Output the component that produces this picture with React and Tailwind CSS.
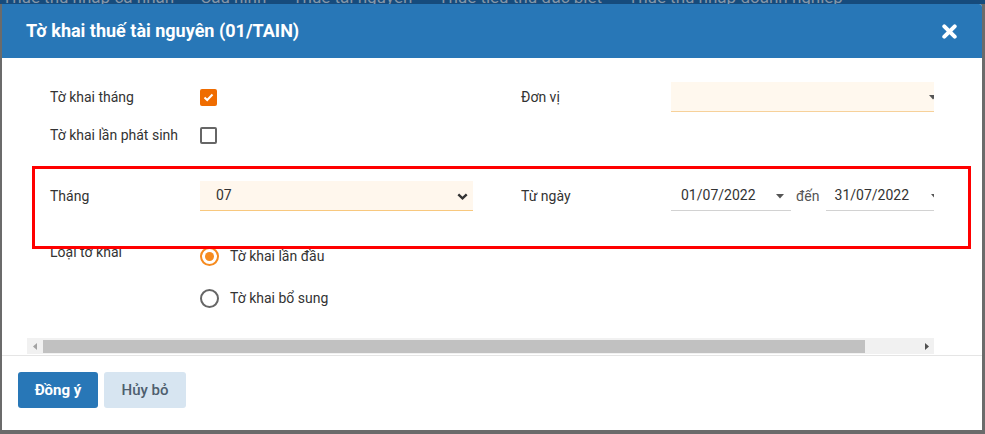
import React from "react";

function Caret({ className = "" }) {
  return (
    <svg width="8" height="5" viewBox="0 0 8 5" className={className}>
      <polygon points="0,0 8,0 4,4.5" fill="#555" />
    </svg>
  );
}

export default function App() {
  return (
    <div className="w-[985px] h-[434px] bg-[#6b6b6b] overflow-hidden font-['Roboto',sans-serif] text-[#333]">
      <div className="h-[4px] bg-[#164b7c] overflow-hidden">
        <div className="flex gap-[26px] pl-[2px] text-[17px] leading-[17px] -mt-[11px] text-[#8596a8] whitespace-nowrap">
          <span>Thuế thu nhập cá nhân</span>
          <span>Cấu hình</span>
          <span>Thuế tài nguyên</span>
          <span>Thuế tiêu thụ đặc biệt</span>
          <span>Thuế thu nhập doanh nghiệp</span>
        </div>
      </div>
      <div className="relative ml-[2px] w-[980px] h-[426px] bg-white flex flex-col rounded-tr-[3px]">
        {/* Header */}
        <div className="h-[54px] bg-[#2877b7] rounded-tr-[3px] flex items-center justify-between pl-[24px] pr-[25px]">
          <div className="text-white text-[18px] font-bold leading-none">Tờ khai thuế tài nguyên (01/TAIN)</div>
          <svg width="15" height="15" viewBox="0 0 15 15">
            <line x1="2.3" y1="2.3" x2="12.7" y2="12.7" stroke="#fff" strokeWidth="4" strokeLinecap="round" />
            <line x1="12.7" y1="2.3" x2="2.3" y2="12.7" stroke="#fff" strokeWidth="4" strokeLinecap="round" />
          </svg>
        </div>

        {/* Body */}
        <div className="h-[297px] pl-[25px] border-b border-[#e5e5e5] box-content">
          <div className="w-[907px] h-[280px] overflow-hidden">
            <div className="w-[960px] pl-[23px] pt-[24px] text-[14px]">
              {/* Row 1 */}
              <div className="flex items-center h-[30px]">
                <div className="w-[150px]">Tờ khai tháng</div>
                <div className="w-[321px] flex items-center">
                  <div className="w-[17px] h-[17px] rounded-[2px] bg-[#ef6c00] flex items-center justify-center">
                    <svg width="11" height="9" viewBox="0 0 11 9">
                      <polyline points="1.5,4.5 4.2,7 9.5,1.5" fill="none" stroke="#fff" strokeWidth="2" />
                    </svg>
                  </div>
                </div>
                <div className="w-[150px]">Đơn vị</div>
                <div className="relative w-[273px] h-[30px] bg-[#fff8ee] border-b border-[#f7d19a]">
                  <Caret className="absolute right-[7px] top-[13px]" />
                </div>
              </div>

              {/* Row 2 */}
              <div className="flex items-center h-[31px] mt-[8px]">
                <div className="w-[150px]">Tờ khai lần phát sinh</div>
                <div className="w-[17px] h-[17px] rounded-[2px] border-2 border-[#666]"></div>
              </div>

              {/* Row 3 */}
              <div className="flex items-center h-[30px] mt-[30px]">
                <div className="w-[150px]">Tháng</div>
                <div className="w-[321px]">
                  <div className="relative w-[273px] h-[30px] bg-[#fff7ed] border-b border-[#f8c87e] flex items-center pl-[16px]">
                    07
                    <svg width="11" height="7" viewBox="0 0 11 7" className="absolute right-[5px] top-[12px]">
                      <polyline points="1.3,1.3 5.5,5.3 9.7,1.3" fill="none" stroke="#333" strokeWidth="2.4" />
                    </svg>
                  </div>
                </div>
                <div className="w-[150px]">Từ ngày</div>
                <div className="flex items-center">
                  <div className="relative w-[120px] h-[30px] border-b border-[#d2d2d2] flex items-center pl-[10px]">
                    01/07/2022
                    <Caret className="absolute right-[7px] top-[13px]" />
                  </div>
                  <span className="ml-[5px] text-[#555]">đến</span>
                  <div className="relative ml-[6px] w-[120px] h-[30px] border-b border-[#d2d2d2] flex items-center pl-[9px]">
                    31/07/2022
                    <Caret className="absolute right-[7px] top-[13px]" />
                  </div>
                </div>
              </div>

              {/* Row 4 */}
              <div className="flex items-start h-[20px] mt-[35px]">
                <div className="w-[150px] leading-[20px] -mt-[4px]">Loại tờ khai</div>
                <div className="flex items-center h-[20px]">
                  <div className="w-[19px] h-[19px] rounded-full border-2 border-[#f68b1f] flex items-center justify-center">
                    <div className="w-[9px] h-[9px] rounded-full bg-[#f68b1f]"></div>
                  </div>
                  <span className="ml-[11px]">Tờ khai lần đầu</span>
                </div>
              </div>

              {/* Row 5 */}
              <div className="flex items-center h-[20px] mt-[22px]">
                <div className="w-[150px]"></div>
                <div className="w-[19px] h-[19px] rounded-full border-2 border-[#666]"></div>
                <span className="ml-[11px]">Tờ khai bổ sung</span>
              </div>
            </div>
          </div>

          {/* Scrollbar */}
          <div className="w-[907px] h-[16px] bg-[#f1f1f1] flex items-start">
            <div className="w-[16px] h-[16px] flex items-center justify-center">
              <svg width="4" height="7" viewBox="0 0 4 7"><polygon points="4,0 4,7 0,3.5" fill="#a3a3a3" /></svg>
            </div>
            <div className="w-[822px] h-[13px] mt-[2px] bg-[#c1c1c1]"></div>
            <div className="flex-1 h-[16px] flex items-center justify-end pr-[5px]">
              <svg width="4" height="7" viewBox="0 0 4 7"><polygon points="0,0 0,7 4,3.5" fill="#505050" /></svg>
            </div>
          </div>
        </div>

        {/* Footer */}
        <div className="flex-1 pt-[16px] pl-[16px] flex items-start gap-[6px]">
          <button className="w-[80px] h-[36px] rounded-[3px] bg-[#2877b7] text-white text-[15px] font-bold">Đồng ý</button>
          <button className="w-[82px] h-[36px] rounded-[3px] bg-[#d7e5f1] text-[#4e5e6e] text-[15px] font-medium">Hủy bỏ</button>
        </div>

        {/* Annotation highlight */}
        <div className="absolute left-[30px] top-[162px] w-[939px] h-[83px] border-[3px] border-[#ff0000] pointer-events-none"></div>
      </div>
    </div>
  );
}
